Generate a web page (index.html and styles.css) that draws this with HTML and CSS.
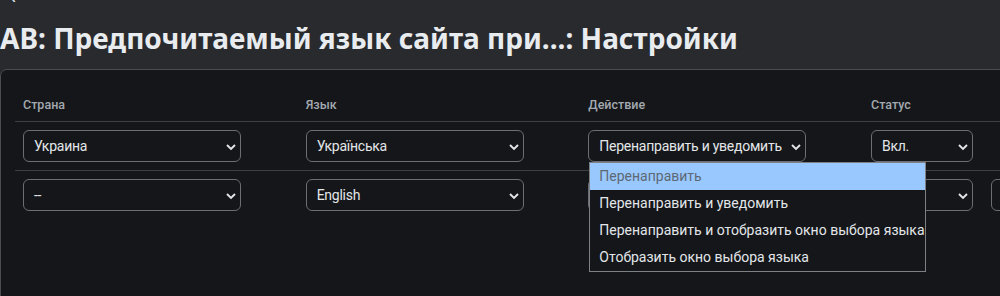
FILE: index.html
```html
<!DOCTYPE html>
<html lang="ru">
<head>
    <meta charset="UTF-8" />
    <title>Настройки</title>
    <link rel="stylesheet" href="styles.css">
</head>
<body>
    <a class="back" href="">&lsaquo;</a>
    <h1 class="page-title">AB: Предпочитаемый язык сайта при...: Настройки</h1>

    <div class="card">
        <table class="rules">
            <thead>
                <tr>
                    <th class="col-wide">Страна</th>
                    <th class="col-wide">Язык</th>
                    <th class="col-wide">Действие</th>
                    <th class="col-status">Статус</th>
                    <th></th>
                </tr>
            </thead>
            <tbody>
                <tr>
                    <td><div class="select">Украина<svg viewBox="0 0 10 10"><path d="M1 3l4 4 4-4"/></svg></div></td>
                    <td><div class="select">Українська<svg viewBox="0 0 10 10"><path d="M1 3l4 4 4-4"/></svg></div></td>
                    <td>
                        <div class="select open">Перенаправить и уведомить<svg viewBox="0 0 10 10"><path d="M1 3l4 4 4-4"/></svg></div>
                        <!-- native listbox of the open select -->
                        <ul class="listbox">
                            <li class="active">Перенаправить</li>
                            <li>Перенаправить и уведомить</li>
                            <li>Перенаправить и отобразить окно выбора языка</li>
                            <li>Отобразить окно выбора языка</li>
                        </ul>
                    </td>
                    <td><div class="select small">Вкл.<svg viewBox="0 0 10 10"><path d="M1 3l4 4 4-4"/></svg></div></td>
                    <td></td>
                </tr>
                <tr>
                    <td><div class="select">--<svg viewBox="0 0 10 10"><path d="M1 3l4 4 4-4"/></svg></div></td>
                    <td><div class="select">English<svg viewBox="0 0 10 10"><path d="M1 3l4 4 4-4"/></svg></div></td>
                    <td><div class="select"><span class="hidden-value">Перенаправить</span><svg viewBox="0 0 10 10"><path d="M1 3l4 4 4-4"/></svg></div></td>
                    <td><div class="select small">Вкл.<svg viewBox="0 0 10 10"><path d="M1 3l4 4 4-4"/></svg></div></td>
                    <td><div class="btn"></div></td>
                </tr>
            </tbody>
        </table>
    </div>
</body>
</html>
```

FILE: styles.css
```css
* {
    margin: 0;
    padding: 0;
    box-sizing: border-box;
}

body {
    overflow: hidden;
    background-color: #282a2e;
    color: #dee2e6;
    font-family: Roboto, "Noto Sans", sans-serif;
}

.back {
    display: block;
    margin: -13px 0 0 9px;
    height: 18px;
    color: #dee2e6;
    text-decoration: none;
    font-size: 24px;
    line-height: 18px;
}

.page-title {
    font-family: "Noto Sans", sans-serif;
    font-size: 28px;
    font-weight: bold;
    color: #e9ecef;
    line-height: 36px;
    margin: 15px 0 13px;
    white-space: nowrap;
}

.card {
    width: 1040px;
    background-color: #141619;
    border: 1px solid #494c51;
    border-radius: 7px;
    padding: 15px 0 0 14px;
    height: 240px;
}

.rules {
    border-collapse: collapse;
}

.rules th {
    text-align: left;
    font-size: 12.5px;
    font-weight: 500;
    color: #a3a9b0;
    padding: 11px 8px 7px;
    line-height: 18px;
    border-bottom: 1px solid #3c3f44;
}

.rules td {
    padding: 8px;
    border-bottom: 1px solid #3c3f44;
    position: relative;
}

.rules tbody tr:last-child td {
    border-bottom: none;
}

.col-wide {
    width: 283px;
}

.col-status {
    width: 120px;
}

.select {
    display: flex;
    align-items: center;
    justify-content: space-between;
    width: 218px;
    height: 32px;
    padding: 0 4px 0 10px;
    border: 1px solid #6b6e73;
    border-radius: 6px;
    font-size: 14px;
    letter-spacing: -0.25px;
    color: #e3e6e9;
    white-space: nowrap;
}

.select.small {
    width: 102px;
}

.select svg {
    width: 10px;
    height: 10px;
    margin-top: 1px;
    fill: none;
    stroke: #e3e6e9;
    stroke-width: 1.9;
    flex-shrink: 0;
}

.hidden-value {
    visibility: hidden;
}

.btn {
    width: 40px;
    height: 32px;
    border: 1px solid #6b6e73;
    border-radius: 6px;
}

.listbox {
    position: absolute;
    top: 40px;
    left: 9px;
    width: 337px;
    list-style: none;
    background-color: #141619;
    border: 1px solid #7d8085;
    z-index: 10;
}

.listbox li {
    height: 27px;
    line-height: 27px;
    padding-left: 9px;
    font-size: 14px;
    color: #e3e6e9;
    white-space: nowrap;
}

.listbox li.active {
    background-color: #99c8ff;
    color: #5d6875;
}
```
